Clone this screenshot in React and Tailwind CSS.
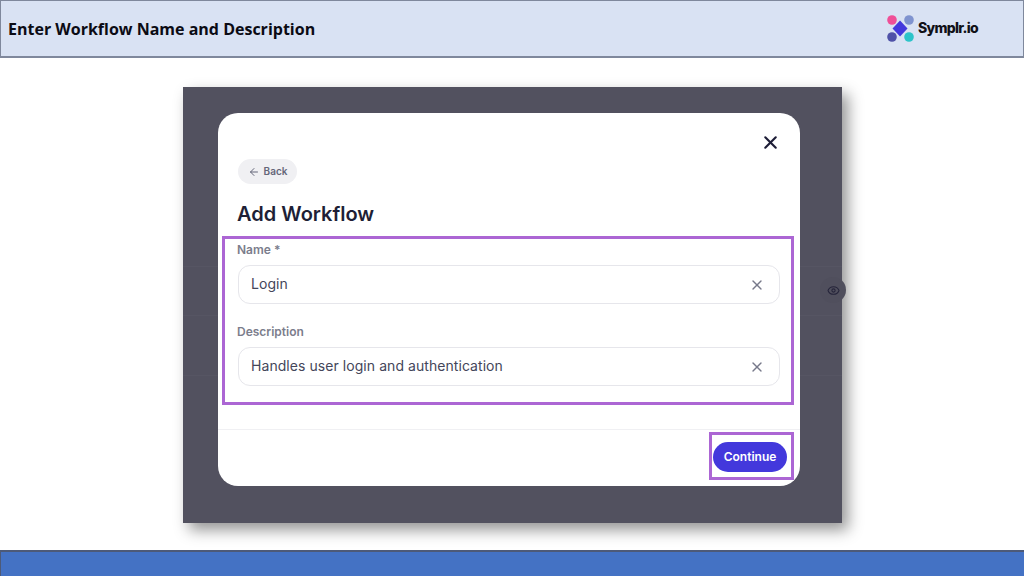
import { ArrowLeft, Eye, X } from 'lucide-react'

const poppins = "font-['Inter','Noto_Sans',sans-serif]"

function Logo() {
  return (
    <div className="flex items-center">
      <svg width="32" height="30" viewBox="0 0 32 30">
        <circle cx="6" cy="6" r="4.8" fill="#ef4f97" />
        <circle cx="23" cy="6" r="4.8" fill="#7f93cf" />
        <circle cx="6" cy="23" r="4.8" fill="#4f52a8" />
        <circle cx="23" cy="23" r="4.8" fill="#2cc4c9" />
        <path d="M14 6.5 L21.5 14.5 L14 22.5 L6.5 14.5 Z" fill="#4338dc" />
      </svg>
      <span className={`mt-[-2px] text-[14px] font-extrabold tracking-[-0.7px] text-[#111118] ${poppins}`}>Symplr.io</span>
    </div>
  )
}

function Field({ label, value }) {
  return (
    <div className="flex flex-col">
      <label className={`-ml-px text-[12px] leading-[15px] font-semibold text-[#7b7d8c] ${poppins}`}>{label}</label>
      <div className="mt-[8px] flex h-[39px] items-center justify-between rounded-[12px] border border-[#e6e6eb] pl-[12px] pr-[14px]">
        <span className={`pb-[2px] text-[14px] tracking-[0.06px] text-[#44465a] ${poppins}`}>{value}</span>
        <X size={16} strokeWidth={2} className="text-[#77798a]" />
      </div>
    </div>
  )
}

export default function App() {
  return (
    <div className="flex h-[576px] w-[1024px] flex-col overflow-hidden bg-white">
      <header className="flex h-[58px] shrink-0 items-center justify-between border border-b-2 border-[#7f889c] bg-[#d9e2f3] pl-[7px] pr-[45px]">
        <h1 className="font-['Open_Sans',sans-serif] text-[16px] font-bold text-[#0b0b14]">Enter Workflow Name and Description</h1>
        <Logo />
      </header>

      <main className="flex flex-1 justify-center pl-[1px] pt-[29px]">
        <div className="relative h-[436px] w-[659px] bg-[#52515f] pl-[35px] pt-[26px] shadow-[6px_7px_14px_rgba(0,0,0,0.42)]">
          <div className="absolute inset-x-0 top-[179px] h-[50px] border-y border-[#565563]" />
          <div className="absolute inset-x-0 top-[288px] border-t border-[#565563]" />
          <div className="absolute left-[637px] top-[190px] flex size-[26px] items-center justify-center rounded-full bg-[#504f5d]">
            <Eye size={13} className="text-[#25243a]" />
          </div>

          <div className="relative flex h-[373px] w-[582px] flex-col rounded-[20px] bg-white">
            <div className="flex justify-end pr-[19px] pt-[19px]">
              <X size={21} strokeWidth={2.4} className="text-[#1c1c36]" />
            </div>
            <div className="flex flex-1 flex-col px-[20px] pt-[6px]">
              <button className="flex h-[25px] w-[59px] items-center justify-center gap-[4px] rounded-full bg-[#f0f0f3] text-[#65677a]">
                <ArrowLeft size={12} />
                <span className={`text-[10px] font-semibold ${poppins}`}>Back</span>
              </button>
              <h2 className={`-ml-px mt-[16px] text-[20px] leading-[28px] font-semibold text-[#1e1f36] ${poppins}`}>Add Workflow</h2>
              <div className="mt-[14px] flex flex-col gap-[20px]">
                <Field label="Name *" value="Login" />
                <Field label="Description" value="Handles user login and authentication" />
              </div>
            </div>
            <div className="flex h-[57px] items-start justify-end border-t border-[#f0f0f3] pr-[13px] pt-[12px]">
              <button className={`h-[30px] w-[74px] rounded-full bg-[#4338dc] text-[12px] font-semibold text-white ${poppins}`}>Continue</button>
            </div>

            <div className="absolute left-[4px] top-[123px] h-[169px] w-[572px] border-[3px] border-[#ac66d4]" />
            <div className="absolute left-[491px] top-[319px] h-[48px] w-[85px] border-[3px] border-[#ac66d4]" />
          </div>
        </div>
      </main>

      <footer className="h-[26px] shrink-0 border-t-2 border-l border-[#4d5a78] bg-[#4472c4]" />
    </div>
  )
}
